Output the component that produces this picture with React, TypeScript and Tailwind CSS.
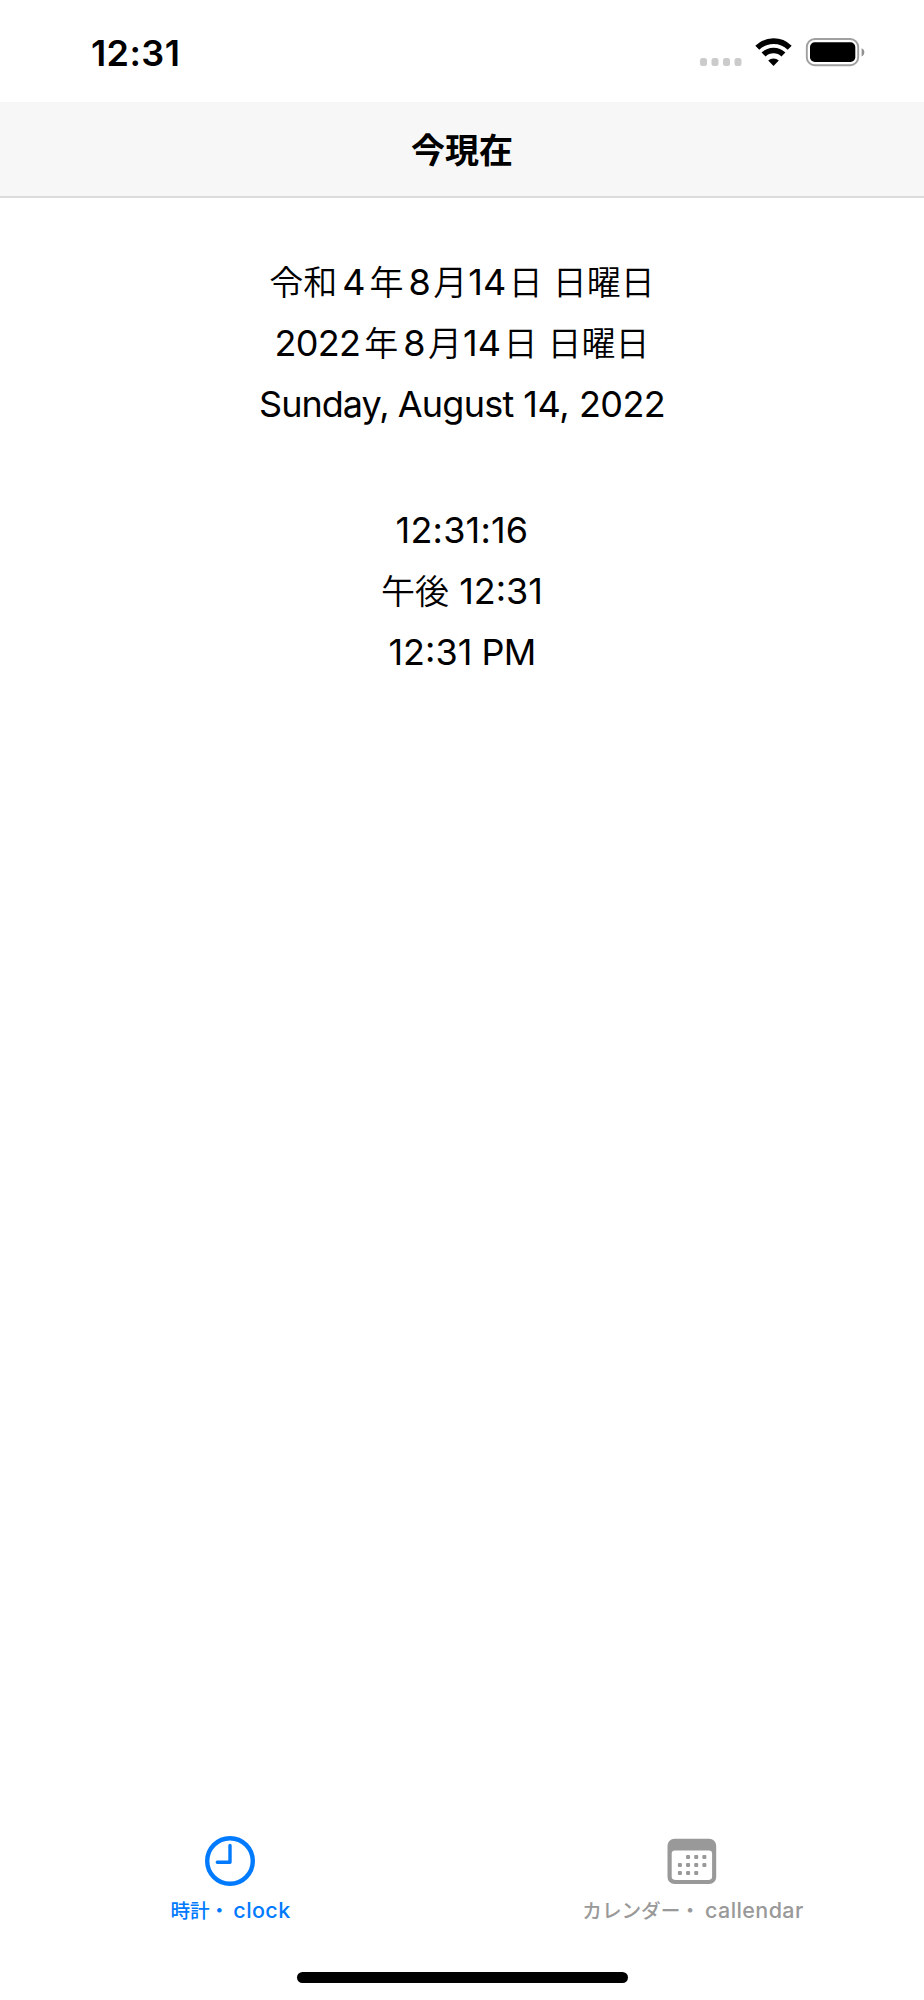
import type { ReactNode } from "react";

function Kanji({ children, className = "" }: { children: ReactNode; className?: string }) {
  return (
    <span
      className={`font-['Noto_Sans_CJK_JP',sans-serif] font-[350] text-[34px] leading-none tracking-normal ${className}`}
    >
      {children}
    </span>
  );
}

function Line({ children, className = "" }: { children: ReactNode; className?: string }) {
  return (
    <p
      className={`h-[61.2px] whitespace-pre text-center text-[36px] leading-[61.2px] ${className}`}
    >
      {children}
    </p>
  );
}

function StatusBar() {
  return (
    <header className="flex h-[102px] items-start justify-between pl-[91px] pr-[59px]">
      <time className="pt-[31px] text-[36px] font-semibold leading-[44px] tracking-[0.4px]">
        12:31
      </time>
      <svg width="166" height="30" viewBox="0 0 166 30" className="mt-[37px]">
        <g fill="#cbcbcb">
          <rect x="1" y="21" width="7" height="8" rx="2.5" />
          <rect x="12.5" y="21" width="7" height="8" rx="2.5" />
          <rect x="24" y="21" width="7" height="8" rx="2.5" />
          <rect x="35.5" y="21" width="7" height="8" rx="2.5" />
        </g>
        <g fill="none" stroke="#000" strokeWidth="5.6">
          <path d="M58.3 10.8a23 23 0 0 1 32.4 0" />
          <path d="M64.6 17.6a14 14 0 0 1 19.8 0" />
        </g>
        <path d="M74.5 29l-5.3-5.4a7.6 7.6 0 0 1 10.6 0z" />
        <rect x="107.8" y="2" width="51.4" height="26.2" rx="8" fill="none" stroke="#a0a0a0" strokeWidth="1.9" />
        <rect x="111" y="5.3" width="45.3" height="19.7" rx="4.8" />
        <path d="M162.6 11.2c3.6 1.2 3.6 7 0 8.2z" fill="#909090" />
      </svg>
    </header>
  );
}

function ClockIcon() {
  return (
    <svg width="50" height="50" viewBox="0 0 50 50" fill="none" stroke="currentColor" className="mr-[2px]">
      <circle cx="25" cy="25" r="22.8" strokeWidth="4.4" />
      <path d="M25 9.5v16.7H12.3" strokeWidth="3.4" strokeLinecap="round" strokeLinejoin="round" />
    </svg>
  );
}

const DOTS = [
  [1, 0], [2, 0], [3, 0],
  [0, 1], [1, 1], [2, 1], [3, 1],
  [0, 2], [1, 2], [2, 2],
];

function CalendarIcon() {
  return (
    <svg width="50" height="50" viewBox="0 0 50 50" fill="currentColor" className="mr-[2px]">
      <path
        fillRule="evenodd"
        d="M7.5 2.7h34.7a7 7 0 0 1 7 7v31.4a7 7 0 0 1-7 7H7.5a7 7 0 0 1-7-7V9.7a7 7 0 0 1 7-7zM8 14.5a3.3 3.3 0 0 0-3.3 3.3v22.8a3.3 3.3 0 0 0 3.3 3.3h33.8a3.3 3.3 0 0 0 3.3-3.3V17.8a3.3 3.3 0 0 0-3.3-3.3z"
      />
      {DOTS.map(([col, row]) => (
        <rect
          key={`${col}-${row}`}
          x={10.9 + col * 8.15}
          y={19.1 + row * 8}
          width="4"
          height="4"
          rx="1"
        />
      ))}
    </svg>
  );
}

function TabBar() {
  return (
    <nav className="grid h-[136px] grid-cols-2 text-[21.5px] font-medium leading-[28px]">
      <a className="flex flex-col items-center text-[#007aff]">
        <ClockIcon />
        <span className="mt-[10px] mr-[1px] whitespace-pre tracking-[0.4px]">
          <Kanji className="mr-[-2px] text-[19.6px]! font-medium!">時計・</Kanji> clock
        </span>
      </a>
      <a className="flex flex-col items-center text-[#999999]">
        <CalendarIcon />
        <span className="mt-[10px] whitespace-pre tracking-[0.4px]">
          <Kanji className="mr-[-1px] text-[19.6px]! font-medium!">カレンダー・</Kanji> callendar
        </span>
      </a>
    </nav>
  );
}

export default function App() {
  return (
    <div className="flex h-[2000px] w-[924px] flex-col bg-white font-[Inter,sans-serif] text-black">
      <StatusBar />
      <div className="flex h-[96px] items-center justify-center border-b-2 border-[#dcdcdc] bg-[#f7f7f7]">
        <h1 className="font-['Noto_Sans_CJK_JP',sans-serif] text-[34px] font-bold leading-none">
          今現在
        </h1>
      </div>

      <main className="grow pt-[53.6px]">
        <Line>
          <Kanji className="mr-[5px]">令和</Kanji>4<Kanji className="ml-[4px] mr-[5px]">年</Kanji>8
          <Kanji className="ml-[2.5px] mr-[1px]">月</Kanji>14
          <Kanji className="ml-[2.5px]">日</Kanji> <Kanji>日曜日</Kanji>
        </Line>
        <Line>
          <span className="tracking-[-0.7px]">2022</span>
          <Kanji className="ml-[4px] mr-[5px]">年</Kanji>8
          <Kanji className="ml-[2.5px] mr-[1px]">月</Kanji>14
          <Kanji className="ml-[2.5px]">日</Kanji> <Kanji>日曜日</Kanji>
        </Line>
        <Line className="tracking-[-0.7px]">
          <span className="tracking-[-1px]">Sunday, </span>August <span className="tracking-[-0.3px]">14, </span>2022
        </Line>
        <Line className="mt-[64.5px] tracking-[0.2px]">12:31:16</Line>
        <Line>
          <Kanji>午後</Kanji> 12:31
        </Line>
        <Line>
          12:31<span className="tracking-[-0.8px]"> PM</span>
        </Line>
      </main>

      <TabBar />
      <footer className="flex h-[28px] justify-center">
        <div className="h-[10.5px] w-[331px] rounded-full bg-black" />
      </footer>
    </div>
  );
}
